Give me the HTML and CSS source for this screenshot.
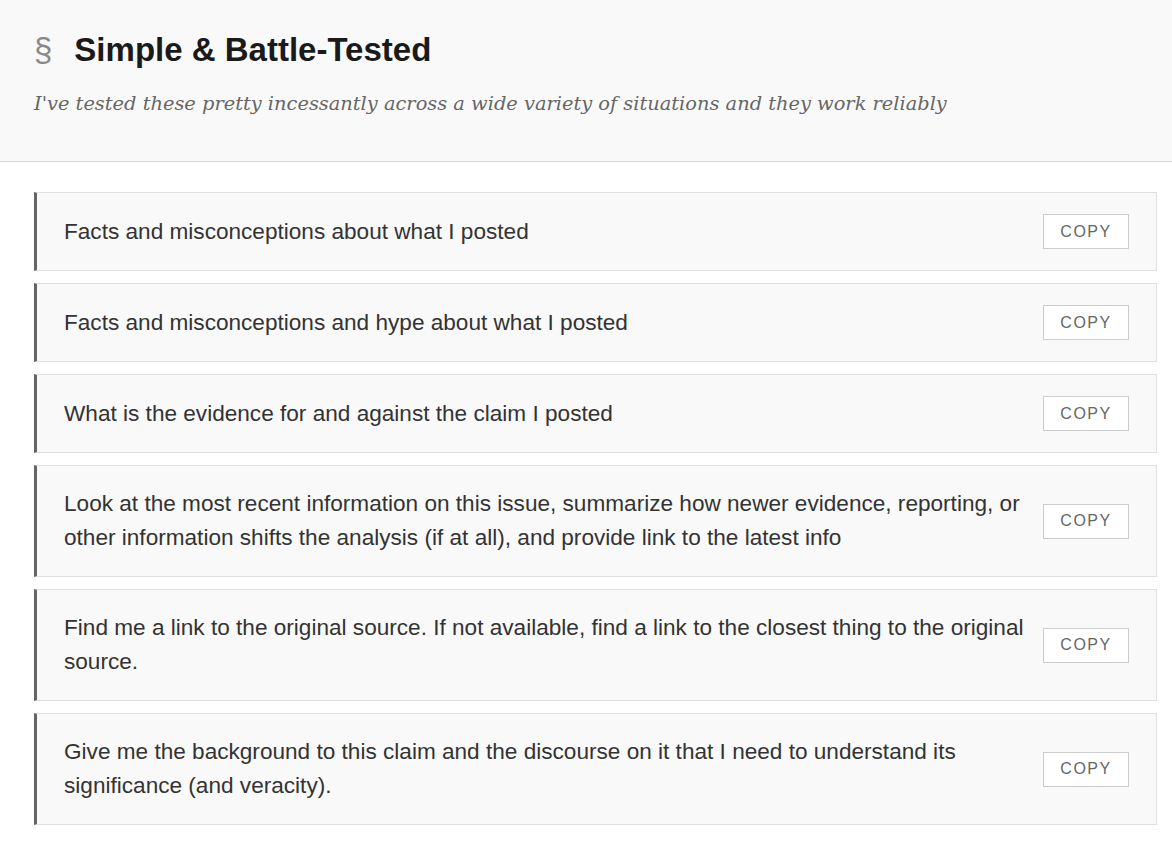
FILE: index.html
```html
<!DOCTYPE html>
<html lang="en">
<head>
<meta charset="utf-8">
<title>Simple &amp; Battle-Tested</title>
<link rel="stylesheet" href="styles.css">
</head>
<body>
<header class="section-head">
  <h2 class="section-title"><span class="section-mark">§</span>Simple &amp; Battle-Tested</h2>
  <p class="section-sub">I've tested these pretty incessantly across a wide variety of situations and they work reliably</p>
</header>
<main class="prompt-list">
  <div class="prompt-card">
    <p class="prompt-text">Facts and misconceptions about what I posted</p>
    <button class="copy-btn">COPY</button>
  </div>
  <div class="prompt-card">
    <p class="prompt-text">Facts and misconceptions and hype about what I posted</p>
    <button class="copy-btn">COPY</button>
  </div>
  <div class="prompt-card">
    <p class="prompt-text">What is the evidence for and against the claim I posted</p>
    <button class="copy-btn">COPY</button>
  </div>
  <div class="prompt-card">
    <p class="prompt-text">Look at the most recent information on this issue, summarize how newer evidence, reporting, or other information shifts the analysis (if at all), and provide link to the latest info</p>
    <button class="copy-btn">COPY</button>
  </div>
  <div class="prompt-card">
    <p class="prompt-text">Find me a link to the original source. If not available, find a link to the closest thing to the original source.</p>
    <button class="copy-btn">COPY</button>
  </div>
  <div class="prompt-card">
    <p class="prompt-text">Give me the background to this claim and the discourse on it that I need to understand its significance (and veracity).</p>
    <button class="copy-btn">COPY</button>
  </div>
</main>
</body>
</html>
```
FILE: styles.css
```css
* { box-sizing: border-box; }
html, body { margin: 0; padding: 0; background: #ffffff; }
body { font-family: "Liberation Sans", Arial, sans-serif; color: #333; }

.section-head {
  background: #f9f9f9;
  border-bottom: 1px solid #d6d6d6;
  padding: 30px 34px 0 34px;
  height: 162px;
}
.section-title {
  margin: 0;
  font-family: "Liberation Sans", Arial, sans-serif;
  font-weight: 700;
  font-size: 33px;
  line-height: 40px;
  color: #1a1a1a;
  display: flex;
  align-items: baseline;
}
.section-mark {
  font-weight: 400;
  color: #888;
  margin-right: 22px;
}
.section-sub {
  margin: 19px 0 0 0;
  font-family: "DejaVu Serif", Georgia, serif;
  font-style: italic;
  font-size: 19.4px;
  line-height: 30px;
  color: #666;
}

.prompt-list {
  padding: 30px 15px 20px 34px;
  display: flex;
  flex-direction: column;
  gap: 12px;
}
.prompt-card {
  display: flex;
  align-items: center;
  gap: 14px;
  background: #f9f9f9;
  border: 1px solid #e0e0e0;
  border-left: 3px solid #666;
  padding: 21px 27px 21px 27px;
}
.prompt-text {
  flex: 1;
  margin: 0;
  font-size: 22.6px;
  line-height: 34px;
  color: #333;
}
.copy-btn {
  flex: none;
  width: 86px;
  height: 35px;
  background: #fff;
  border: 1px solid #ccc;
  font-family: "Liberation Sans", Arial, sans-serif;
  font-size: 16px;
  letter-spacing: 1.5px;
  color: #666;
  padding: 0;
}
```
